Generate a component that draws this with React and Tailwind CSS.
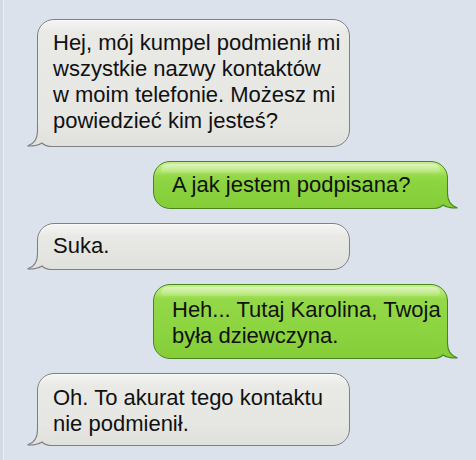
const grayFill =
  'bg-[linear-gradient(180deg,#f5f5f3_0px,#e9e9e6_12px,#e6e6e2_calc(100%_-_24px),#e0e0dc_100%)]';
const greenFill =
  'bg-[linear-gradient(180deg,#c6ef8c_0px,#ace566_9px,#94d948_14px,#8bd33f_calc(100%_-_24px),#86ce38_100%)]';

const palette = {
  left: { top: '#e6e6e2', bottom: '#e0e0dc', stroke: '#808080' },
  right: { top: '#8bd33f', bottom: '#86ce38', stroke: '#47861f' },
};

// speech bubble tail, drawn over the bubble's square bottom corner
function Tail({ side }) {
  const isLeft = side === 'left';
  const c = palette[side];
  const id = `tail-${side}`;
  return (
    <svg
      width="26"
      height="22"
      viewBox="0 0 26 22"
      className={`absolute bottom-[-1px] ${isLeft ? 'left-[-12px]' : 'right-[-12px] -scale-x-100'}`}
    >
      <defs>
        <linearGradient id={id} x1="0" y1="0" x2="0" y2="1">
          <stop offset="0" stopColor={c.top} />
          <stop offset="1" stopColor={c.bottom} />
        </linearGradient>
      </defs>
      <path
        d="M11.5,0 L11.5,6 C11.5,14 8,19 1.5,21 C7,21.3 12,20.5 16,18 C18,20 21,21.5 26,21.5 L26,0 Z"
        fill={`url(#${id})`}
      />
      <path
        d="M1.5,21 C7,21.3 12,20.5 16,18 C18,20 21,21.5 26,21.5 L26,22 L1.5,22 Z"
        fill="#dbe2ec"
      />
      <path
        d="M11.5,0 L11.5,6 C11.5,14 8,19 1.5,21 C7,21.3 12,20.5 16,18 C18,20 21,21.5 26,21.5"
        fill="none"
        stroke={c.stroke}
        strokeWidth="1.1"
      />
    </svg>
  );
}

function Bubble({ side, lines, className }) {
  const isLeft = side === 'left';
  return (
    <div
      className={`relative border rounded-[17px] ${
        isLeft
          ? `self-start w-[313px] pl-[15px] rounded-bl-none border-[#808080] ${grayFill} shadow-[inset_0_1px_0_#fafaf8]`
          : `self-end w-[295px] pl-[18px] rounded-br-none border-[#47861f] ${greenFill}`
      } ${className}`}
    >
      {!isLeft && (
        <div className="absolute top-[2px] left-[7px] right-[7px] h-[9px] rounded-t-[12px] rounded-b-[6px] bg-[linear-gradient(180deg,rgba(255,255,255,0.45),rgba(255,255,255,0.1))]" />
      )}
      <div className="relative z-10 text-[22px] leading-[26px] text-[#111] whitespace-nowrap">
        {lines.map((l) => (
          <div key={l}>{l}</div>
        ))}
      </div>
      <Tail side={side} />
    </div>
  );
}

export default function App() {
  return (
    <div
      className="w-[476px] h-[460px] overflow-hidden bg-[#dbe2ec] border-l-[3px] border-[#d4dbe5] flex"
      style={{ fontFamily: '"Liberation Sans", Arial, sans-serif' }}
    >
      <div className="w-px h-full bg-[#e8edf3]" />
      <div className="flex-1 flex flex-col gap-[14px] pt-[19px] pl-[33px] pr-[28px]">
        <Bubble
          side="left"
          className="h-[128px] pt-[10px]"
          lines={[
            'Hej, mój kumpel podmienił mi',
            'wszystkie nazwy kontaktów',
            'w moim telefonie. Możesz mi',
            'powiedzieć kim jesteś?',
          ]}
        />
        <Bubble side="right" className="h-[48px] pt-[10px]" lines={['A jak jestem podpisana?']} />
        <Bubble side="left" className="h-[47px] pt-[9px]" lines={['Suka.']} />
        <Bubble
          side="right"
          className="h-[75px] pt-[12px]"
          lines={['Heh... Tutaj Karolina, Twoja', 'była dziewczyna.']}
        />
        <Bubble
          side="left"
          className="h-[73px] pt-[11px]"
          lines={['Oh. To akurat tego kontaktu', 'nie podmienił.']}
        />
      </div>
    </div>
  );
}
